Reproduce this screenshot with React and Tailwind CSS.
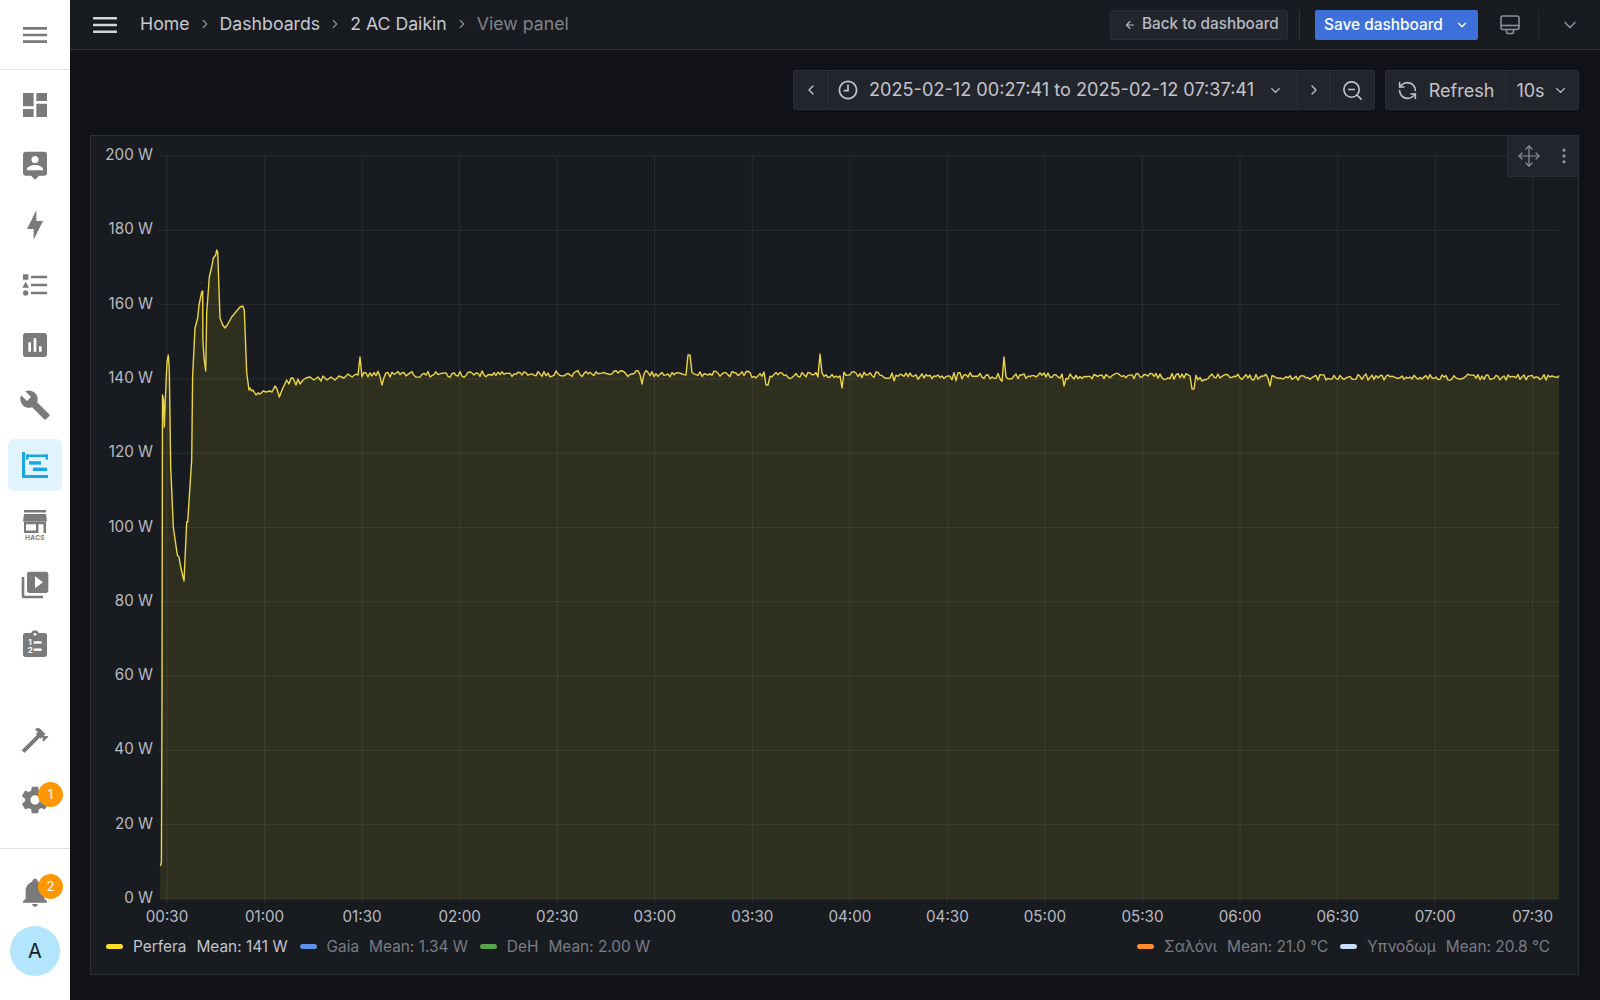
import React from "react";
import { ChevronDown, ChevronLeft, ChevronRight, ArrowLeft, RefreshCcw, ZoomOut, Move, EllipsisVertical } from "lucide-react";

const P = {
  menu: "M3,6H21V8H3V6M3,11H21V13H3V11M3,16H21V18H3V16Z",
  dash: "M13,3V9H21V3M13,21H21V11H13M3,21H11V15H3M3,13H11V3H3V13Z",
  pin: "M19 2H5c-1.11 0-2 .9-2 2v14c0 1.1.89 2 2 2h4l3 3 3-3h4c1.1 0 2-.9 2-2V4c0-1.1-.9-2-2-2zm-7 3.3c1.49 0 2.7 1.21 2.7 2.7 0 1.49-1.21 2.7-2.7 2.7-1.49 0-2.7-1.21-2.7-2.7 0-1.49 1.21-2.7 2.7-2.7zM18 16H6v-.9c0-2 4-3.1 6-3.1s6 1.1 6 3.1v.9z",
  bolt: "M11,15H6L13,1V9H18L11,23V15Z",
  list: "M5,9.5L7.5,14H2.5L5,9.5M3,4H7V8H3V4M5,20A2,2 0 0,0 7,18A2,2 0 0,0 5,16A2,2 0 0,0 3,18A2,2 0 0,0 5,20M9,5V7H21V5H9M9,19H21V17H9V19M9,13H21V11H9V13Z",
  chart: "M19 3H5C3.9 3 3 3.9 3 5V19C3 20.1 3.9 21 5 21H19C20.1 21 21 20.1 21 19V5C21 3.9 20.1 3 19 3M9 17H7V10H9V17M13 17H11V7H13V17M17 17H15V13H17V17Z",
  wrench: "M22.7,19L13.6,9.9C14.5,7.6 14,4.9 12.1,3C10.1,1 7.1,0.6 4.7,1.7L9,6L6,9L1.6,4.7C0.4,7.1 0.9,10.1 2.9,12.1C4.8,14 7.5,14.5 9.8,13.6L18.9,22.7C19.3,23.1 19.9,23.1 20.3,22.7L22.6,20.4C23.1,20 23.1,19.3 22.7,19Z",
  play: "M4,6H2V20A2,2 0 0,0 4,22H18V20H4V6M20,2H8A2,2 0 0,0 6,4V16A2,2 0 0,0 8,18H20A2,2 0 0,0 22,16V4A2,2 0 0,0 20,2M12,14.5V5.5L18,10L12,14.5Z",
  hammer: "M2 19.63L13.43 8.2L12.72 7.5L14.14 6.07L12 3.89C13.2 2.7 15.09 2.7 16.27 3.89L19.87 7.5L18.45 8.91H21.29L22 9.62L18.45 13.21L17.74 12.5V9.62L16.27 11.04L15.56 10.33L4.13 21.76L2 19.63Z",
  cog: "M12,15.5A3.5,3.5 0 0,1 8.5,12A3.5,3.5 0 0,1 12,8.5A3.5,3.5 0 0,1 15.5,12A3.5,3.5 0 0,1 12,15.5M19.43,12.97C19.47,12.65 19.5,12.33 19.5,12C19.5,11.67 19.47,11.34 19.43,11L21.54,9.37C21.73,9.22 21.78,8.95 21.66,8.73L19.66,5.27C19.54,5.05 19.27,4.96 19.05,5.05L16.56,6.05C16.04,5.66 15.5,5.32 14.87,5.07L14.5,2.42C14.46,2.18 14.25,2 14,2H10C9.75,2 9.54,2.18 9.5,2.42L9.13,5.07C8.5,5.32 7.96,5.66 7.44,6.05L4.95,5.05C4.73,4.96 4.46,5.05 4.34,5.27L2.34,8.73C2.21,8.95 2.27,9.22 2.46,9.37L4.57,11C4.53,11.34 4.5,11.67 4.5,12C4.5,12.33 4.53,12.65 4.57,12.97L2.46,14.63C2.27,14.78 2.21,15.05 2.34,15.27L4.34,18.73C4.46,18.95 4.73,19.03 4.95,18.95L7.44,17.94C7.96,18.34 8.5,18.68 9.13,18.93L9.5,21.58C9.54,21.82 9.75,22 10,22H14C14.25,22 14.46,21.82 14.5,21.58L14.87,18.93C15.5,18.67 16.04,18.34 16.56,17.94L19.05,18.95C19.27,19.03 19.54,18.95 19.66,18.73L21.66,15.27C21.78,15.05 21.73,14.78 21.54,14.63L19.43,12.97Z",
  bell: "M21,19V20H3V19L5,17V11C5,7.9 7.03,5.17 10,4.29C10,4.19 10,4.1 10,4A2,2 0 0,1 12,2A2,2 0 0,1 14,4C14,4.1 14,4.19 14,4.29C16.97,5.17 19,7.9 19,11V17L21,19M14,21A2,2 0 0,1 12,23A2,2 0 0,1 10,21",
};

const Mdi = ({ d, size = 32 }) => (
  <svg viewBox="0 0 24 24" width={size} height={size} fill="currentColor"><path d={d} /></svg>
);

const TimelineIcon = () => (
  <svg viewBox="0 0 26 26" width="26" height="26" fill="#1aa5dc">
    <rect x="0" y="0" width="3" height="26" />
    <rect x="0" y="23" width="26" height="3" />
    <rect x="4" y="2.5" width="22" height="2.6" />
    <rect x="4" y="2.5" width="2.4" height="5" />
    <rect x="23.6" y="2.5" width="2.4" height="5" />
    <rect x="7" y="9.2" width="12" height="3.4" />
    <rect x="11" y="15.6" width="14" height="3.4" />
  </svg>
);

const HacsIcon = () => (
  <svg viewBox="0 0 26 32" width="26" height="32" fill="#7a7a7a">
    <rect x="2" y="1" width="22" height="2.5" />
    <path d="M2 5H24L25 12.5H1Z" />
    <path d="M2 12.5H24V24H2ZM4 15.2V21.5H14V15.2ZM16.5 15.2V24H21.5V15.2Z" fillRule="evenodd" />
    <text x="13" y="30.6" textAnchor="middle" fontSize="6.6" fontWeight="700" letterSpacing=".3">HACS</text>
  </svg>
);

const ClipIcon = () => (
  <svg viewBox="0 0 24 24" width="32" height="32">
    <path fill="#7a7a7a" d="M19,3H14.82C14.4,1.84 13.3,1 12,1C10.7,1 9.6,1.84 9.18,3H5A2,2 0 0,0 3,5V19A2,2 0 0,0 5,21H19A2,2 0 0,0 21,19V5A2,2 0 0,0 19,3Z" />
    <circle cx="12" cy="4" r="1" fill="#fff" />
    <text x="7" y="12" fontSize="6" fontWeight="700" fill="#fff">1</text>
    <text x="6.6" y="18" fontSize="6" fontWeight="700" fill="#fff">2</text>
    <rect x="11" y="9.2" width="6" height="1.8" fill="#fff" />
    <rect x="11" y="14.6" width="6" height="1.8" fill="#fff" />
  </svg>
);

const NavItem = ({ children, active }) => (
  <div className="h-[60px] flex items-center justify-center text-[#7a7a7a]">
    {active ? <div className="w-[54px] h-[52px] rounded-md bg-[#e1f3fc] flex items-center justify-center">{children}</div> : children}
  </div>
);

const Badge = ({ n }) => (
  <span className="absolute left-[38px] top-[12px] w-[25px] h-[25px] rounded-full bg-[#ff9800] text-white text-[13px] flex items-center justify-center">{n}</span>
);

const Sidebar = () => (
  <aside className="w-[70px] shrink-0 bg-white flex flex-col">
    <div className="h-[70px] shrink-0 border-b border-[#e0e0e0] flex items-center justify-center text-[#7a7a7a]"><Mdi d={P.menu} /></div>
    <div className="pt-[5px]">
      <NavItem><Mdi d={P.dash} /></NavItem>
      <NavItem><Mdi d={P.pin} /></NavItem>
      <NavItem><Mdi d={P.bolt} /></NavItem>
      <NavItem><Mdi d={P.list} /></NavItem>
      <NavItem><Mdi d={P.chart} /></NavItem>
      <NavItem><Mdi d={P.wrench} /></NavItem>
      <NavItem active><TimelineIcon /></NavItem>
      <NavItem><HacsIcon /></NavItem>
      <NavItem><Mdi d={P.play} /></NavItem>
      <NavItem><ClipIcon /></NavItem>
    </div>
    <div className="mt-auto border-b border-[#e0e0e0] pb-[18px]">
      <NavItem><Mdi d={P.hammer} /></NavItem>
      <div className="relative"><NavItem><Mdi d={P.cog} /></NavItem><Badge n="1" /></div>
    </div>
    <div className="pt-[13px] pb-[24px]">
      <div className="relative"><NavItem><Mdi d={P.bell} /></NavItem><Badge n="2" /></div>
      <div className="mt-[4px] ml-[10px] w-[50px] h-[50px] rounded-full bg-[#b3e5fc] text-[#14202b] text-[20px] flex items-center justify-center">A</div>
    </div>
  </aside>
);

const Crumb = ({ children, dim }) => (
  <span className={dim ? "text-[#80828a]" : "text-[#c8c9d2]"}>{children}</span>
);
const Sep = () => <ChevronRight size={14} strokeWidth={2} className="text-[#8e8f97] mx-[8px]" />;

const MonitorIcon = () => (
  <svg viewBox="0 0 20 20" width="20" height="20" fill="none" stroke="#8e8f97" strokeWidth="1.6" strokeLinejoin="round">
    <rect x="1" y="1" width="18" height="13.5" rx="2" />
    <path d="M1 10.5H19" />
    <path d="M6.5 14.5V17.5A1 1 0 0 0 7.5 18.5H12.5A1 1 0 0 0 13.5 17.5V14.5" />
  </svg>
);

const TopBar = () => (
  <header className="h-[50px] shrink-0 bg-[#181b1f] border-b border-[#2c2e33] flex items-center">
    <svg viewBox="0 0 24 16" width="24" height="16" className="ml-[23px] mr-[23px]" fill="#d5d5dc">
      <rect width="24" height="2.4" y="0" rx=".6" />
      <rect width="24" height="2.4" y="6.8" rx=".6" />
      <rect width="24" height="2.4" y="13.6" rx=".6" />
    </svg>
    <nav className="flex items-center text-[17.7px]">
      <Crumb>Home</Crumb><Sep /><Crumb>Dashboards</Crumb><Sep /><Crumb>2 AC Daikin</Crumb><Sep /><Crumb dim>View panel</Crumb>
    </nav>
    <div className="ml-auto flex items-center">
      <button className="w-[178px] h-[30px] rounded-[2px] bg-[#22252b] border border-[#2c2e33] text-[#b9bac3] text-[15.3px] font-medium flex items-center pl-[13px] gap-[6px]">
        <ArrowLeft size={12} strokeWidth={2.2} /> Back to dashboard
      </button>
      <div className="w-px h-[30px] bg-[#2f3137] ml-[11px] mr-[15px]" />
      <button className="w-[163px] h-[30px] rounded-[2px] bg-[#3d71d9] text-white text-[15.4px] font-medium flex items-center justify-between pl-[9px] pr-[9px]">
        Save dashboard <ChevronDown size={14} strokeWidth={2.2} />
      </button>
      <div className="ml-[2px] w-[60px] flex justify-center"><MonitorIcon /></div>
      <div className="w-px h-[30px] bg-[#25272c] -ml-[2px]" />
      <div className="w-[61px] flex justify-center text-[#8e8f97]"><ChevronDown size={20} strokeWidth={2} /></div>
    </div>
  </header>
);

const seg = "h-full flex items-center justify-center";

const TimeBar = () => (
  <div className="flex justify-end gap-[10px] h-[40px] text-[18px] text-[#c3c4cd]">
    <div className="flex h-full rounded-[2px] bg-[#22252b] border border-[#2c2e33]">
      <div className={`${seg} w-[34px] border-r border-[#2a2c31]`}><ChevronLeft size={16} strokeWidth={2} /></div>
      <div className="h-full w-[469px] flex items-center border-r border-[#2a2c31] pl-[10px]">
        <svg viewBox="0 0 20 20" width="20" height="20" fill="none" stroke="currentColor" strokeWidth="1.7" strokeLinecap="round" className="shrink-0">
          <circle cx="10" cy="10" r="8.6" /><path d="M10 5V10.6H6.4" />
        </svg>
        <span className="ml-[11px] whitespace-nowrap text-[18.15px]">2025-02-12 00:27:41 to 2025-02-12 07:37:41</span>
        <ChevronDown size={15} strokeWidth={2.2} className="ml-[14px] shrink-0" />
      </div>
      <div className={`${seg} w-[34px] border-r border-[#2a2c31]`}><ChevronRight size={16} strokeWidth={2} /></div>
      <div className={`${seg} w-[43px]`}><ZoomOut size={23} strokeWidth={1.7} /></div>
    </div>
    <div className="flex h-full rounded-[2px] bg-[#22252b] border border-[#2c2e33]">
      <div className={`${seg} w-[120px] border-r border-[#2a2c31] gap-[11px]`}><RefreshCcw size={21} strokeWidth={1.8} /> Refresh</div>
      <div className={`${seg} w-[72px] gap-[8px]`}>10s <ChevronDown size={15} strokeWidth={2.2} /></div>
    </div>
  </div>
);

const mulberry = (a) => () => {
  a |= 0; a = (a + 0x6d2b79f5) | 0;
  let t = Math.imul(a ^ (a >>> 15), 1 | a);
  t = (t + Math.imul(t ^ (t >>> 7), 61 | t)) ^ t;
  return ((t ^ (t >>> 14)) >>> 0) / 4294967296;
};

const head = [
  [160,899],[160.4,866],[161.4,862],[162,700],[162.5,395],[163.5,400],[164.3,427],[165.5,395],[167,362],[168.3,355],[169.3,370],[170.7,467],[173.3,527],[177.3,555],[179,557],[180.7,567],[184,581],[186.7,522],[187.7,522],[191.7,460],[192.6,377],[195,328],[197.7,318],[199,305],[201.7,292],[202.7,291],[202.9,340],[204,358],[205.7,371],[206.7,313],[209.3,277],[211.7,267],[213.3,258],[215.7,255],[216.7,250],[217.7,252],[220,318],[222.7,325],[225,328],[227.3,325],[231.7,317],[235,313],[240,307],[242.7,306],[244.3,310],[246.7,373],[249,390],[250,388],[251.7,391],[253,390],[256,395],[258,393],[260,394],[263.3,391],[266,392],[270,391],[272,392],[275,386],[277,389],[279.3,397],[282,390],[286.7,380],[289,384],[291,378],[293,378],[296,385],[298,379],[300,384],[303,380],[306,378],[310,377],[314,380],[318,377],[321,381],[323,376],[327,380],[331,377],[335,380],[339,376],[344,378],[348,374],[352,377],[356,374],
];
const spikes = { 360: 357, 382: 385, 642: 384, 689: 355, 767: 385, 820: 354, 842: 388, 1004: 357, 1064: 386, 1193: 389, 1270: 386 };
const base = (x) => {
  const k = [[356,374.5],[640,373.5],[850,375],[1050,376],[1250,377],[1559,377]];
  for (let i = 0; i < k.length - 1; i++) {
    if (x <= k[i + 1][0]) {
      const t = (x - k[i][0]) / (k[i + 1][0] - k[i][0]);
      return k[i][1] + t * (k[i + 1][1] - k[i][1]);
    }
  }
  return 377;
};
const rnd = mulberry(42);
const pts = [...head];
for (let x = 358; x <= 1559; x += 2) {
  const key = Object.keys(spikes).find((s) => Math.abs(+s - x) <= 1);
  const y = key ? spikes[key] : base(x) + (rnd() - 0.5) * 6.4 + (rnd() < 0.05 ? 2.5 : 0);
  pts.push([x, y]);
}
pts.push([1559, 375.5]);
const lineD = "M" + pts.slice(1).map((p) => `${p[0].toFixed(1)} ${p[1].toFixed(1)}`).join("L");
const fillD = "M160 899L" + pts.slice(1).map((p) => `${p[0].toFixed(1)} ${p[1].toFixed(1)}`).join("L") + "L1559 899Z";

const yTicks = [200,180,160,140,120,100,80,60,40,20,0];
const xTicks = ["00:30","01:00","01:30","02:00","02:30","03:00","03:30","04:00","04:30","05:00","05:30","06:00","06:30","07:00","07:30"];
const yOf = (v) => 899 - v * 3.715;
const xOf = (i) => 167 + i * 97.55;

const Chart = () => (
  <svg viewBox="91 136 1487 790" width="1487" height="790" className="block shrink-0">
    <path d={fillD} fill="#fade2a" fillOpacity="0.1" />
    {yTicks.map((v) => (
      <g key={v}>
        <line x1="160" x2="1559" y1={yOf(v)} y2={yOf(v)} stroke="#fff" strokeOpacity="0.08" />
        <text x="153" y={yOf(v) + 4} textAnchor="end" fontSize="15.2" fill="#b9bac3">{v} W</text>
      </g>
    ))}
    {xTicks.map((t, i) => (
      <g key={t}>
        <line x1={xOf(i)} x2={xOf(i)} y1="156" y2="904" stroke="#fff" strokeOpacity="0.07" />
        <text x={xOf(i)} y="922" textAnchor="middle" fontSize="15.2" fill="#b9bac3">{t}</text>
      </g>
    ))}
    <path d={lineD} fill="none" stroke="#ecd548" strokeWidth="1.4" strokeLinejoin="round" />
  </svg>
);

const Legend = ({ color, name, value, on }) => (
  <div className={`flex items-center ${on ? "text-[#c3c4cd]" : "text-[#7b7c85]"}`}>
    <span className="w-[17px] h-[5px] rounded-full mr-[10px]" style={{ backgroundColor: color }} />
    <span>{name}</span>
    <span className="ml-[10px]">{value}</span>
  </div>
);

const Panel = () => (
  <section className="relative mt-[25px] h-[840px] bg-[#181b1f] border border-[#2c2e33] flex flex-col">
    <Chart />
    <div className="flex justify-between items-center pl-[15px] pr-[28px] text-[15.4px] mt-[9px]">
      <div className="flex gap-[12px]">
        <Legend color="#fade2a" name="Perfera" value="Mean: 141 W" on />
        <Legend color="#5d92e8" name="Gaia" value="Mean: 1.34 W" />
        <Legend color="#5aa64b" name="DeH" value="Mean: 2.00 W" />
      </div>
      <div className="flex gap-[12px]">
        <Legend color="#ff8c2a" name="Σαλόνι" value="Mean: 21.0 °C" />
        <Legend color="#c8dcfb" name="Υπνοδωμ" value="Mean: 20.8 °C" />
      </div>
    </div>
    <div className="absolute -top-px -right-px w-[72px] h-[42px] bg-[#22252b] border border-[#2c2e33] rounded-[2px] flex items-center text-[#8e8f97]">
      <div className="w-[42px] flex justify-center"><Move size={24} strokeWidth={1.2} /></div>
      <div className="flex-1 flex justify-center"><EllipsisVertical size={20} strokeWidth={2} /></div>
    </div>
  </section>
);

export default function App() {
  return (
    <div className="flex w-full h-screen overflow-hidden bg-[#111217] font-['Inter','Noto_Sans',sans-serif]">
      <Sidebar />
      <div className="flex-1 min-w-0 flex flex-col">
        <TopBar />
        <main className="pl-5 pr-[21px] pt-5">
          <TimeBar />
          <Panel />
        </main>
      </div>
    </div>
  );
}
